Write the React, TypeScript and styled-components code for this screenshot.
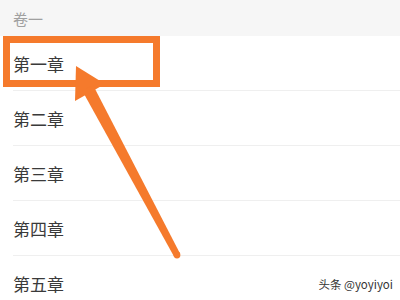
import styled, { createGlobalStyle } from 'styled-components';

const GlobalStyle = createGlobalStyle`
  html, body {
    margin: 0;
    padding: 0;
    background: #ffffff;
  }
  body {
    font-family: 'Noto Sans CJK SC', 'Noto Sans', sans-serif;
  }
`;

const Screen = styled.div`
  position: relative;
  width: 400px;
  height: 300px;
  overflow: hidden;
  background: #ffffff;
`;

const VolumeHeader = styled.div`
  height: 36px;
  display: flex;
  align-items: center;
  padding-left: 13px;
  background: #f6f6f6;
  color: #a0a0a0;
  font-size: 15px;
`;

const ChapterList = styled.ul`
  list-style: none;
  margin: 0;
  padding: 0 0 0 13px;
`;

const ChapterRow = styled.li`
  box-sizing: border-box;
  height: 55px;
  display: flex;
  align-items: center;
  color: #3a3a3a;
  font-size: 17px;
  border-bottom: 1px solid #efefef;
`;

const Highlight = styled.div`
  position: absolute;
  left: 3px;
  top: 36px;
  width: 157px;
  height: 51px;
  box-sizing: border-box;
  border: 7px solid #f57a2c;
`;

const Arrow = styled.svg`
  position: absolute;
  left: 0;
  top: 0;
  pointer-events: none;
`;

const Watermark = styled.div`
  position: absolute;
  right: 7px;
  bottom: 8px;
  font-size: 11.5px;
  color: #333333;
  text-shadow: 0 0 2px #ffffff;
`;

const chapters = ['第一章', '第二章', '第三章', '第四章', '第五章'];

export default function App() {
  return (
    <>
      <GlobalStyle />
      <Screen>
        <VolumeHeader>卷一</VolumeHeader>
        <ChapterList>
          {chapters.map((title) => (
            <ChapterRow key={title}>{title}</ChapterRow>
          ))}
        </ChapterList>
        <Highlight />
        <Arrow width="400" height="300" viewBox="0 0 400 300">
          <polygon points="76,66 105,84 75,101" fill="#f57a2c" />
          <polygon points="93,85 180,253.4 174,256.6 82.4,91" fill="#f57a2c" />
          <circle cx="177" cy="255" r="3.4" fill="#f57a2c" />
        </Arrow>
        <Watermark>头条 @yoyiyoi</Watermark>
      </Screen>
    </>
  );
}
